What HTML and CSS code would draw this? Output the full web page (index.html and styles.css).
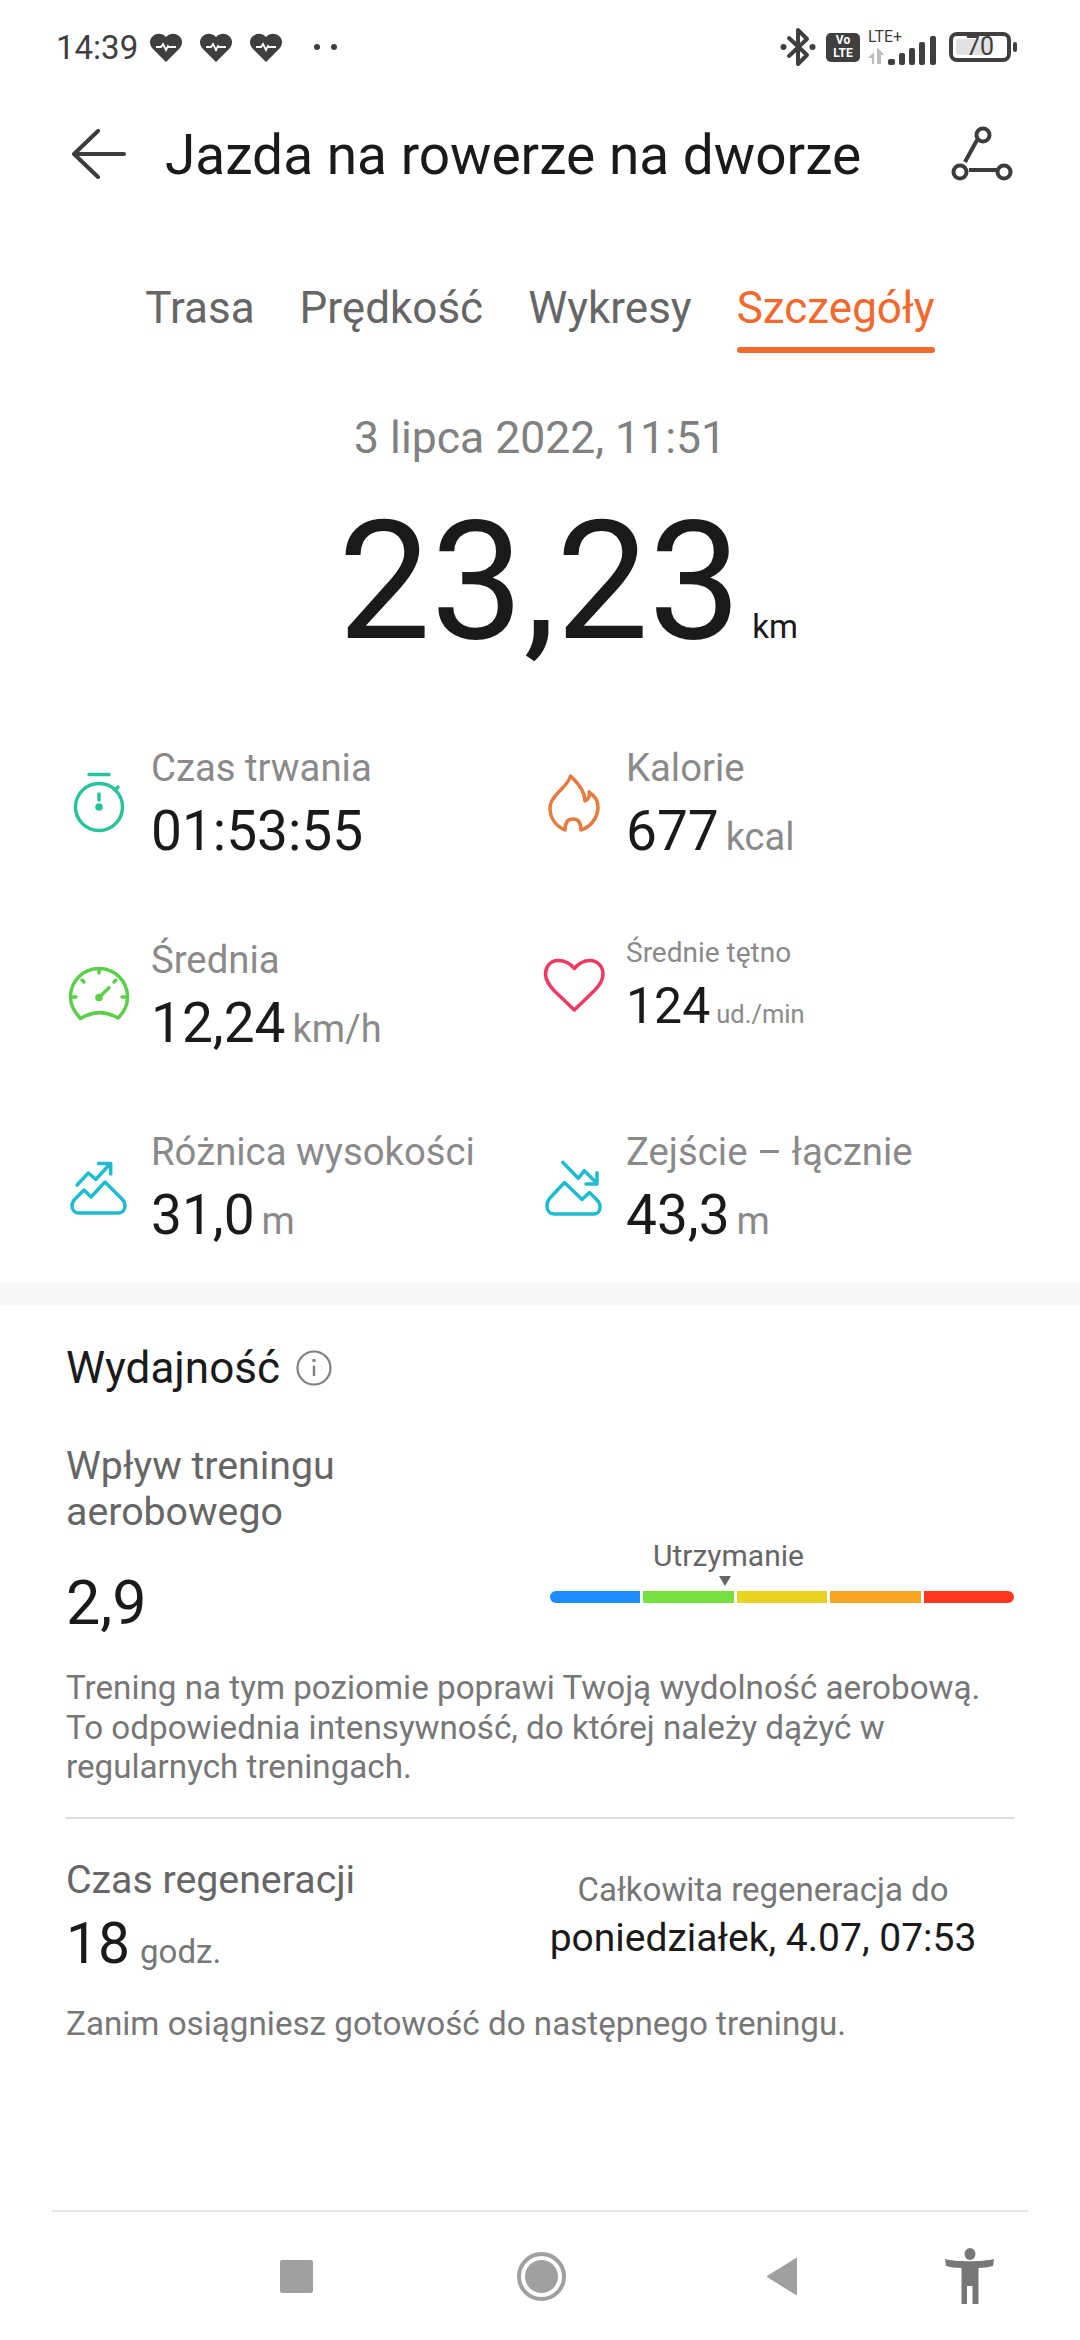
FILE: index.html
```html
<!DOCTYPE html>
<html lang="pl">
<head>
	<meta charset="utf-8">
	<title>Jazda na rowerze na dworze</title>
	<link rel="stylesheet" href="styles.css">
</head>
<body>
<div class="screen">

	<div class="statusbar">
		<span class="time">14:39</span>
		<svg class="heart-ic" viewBox="0 0 32 29"><path class="heart-fill" d="M16 29 3 16C-1 12-1 6 3 3c4-3 9-3 13 1 4-4 9-4 13-1 4 3 4 9 0 13Z"/><path class="heart-pulse" d="M6 14h5l2-3 3 6 2-4 1 1h7"/></svg>
		<svg class="heart-ic" viewBox="0 0 32 29"><path class="heart-fill" d="M16 29 3 16C-1 12-1 6 3 3c4-3 9-3 13 1 4-4 9-4 13-1 4 3 4 9 0 13Z"/><path class="heart-pulse" d="M6 14h5l2-3 3 6 2-4 1 1h7"/></svg>
		<svg class="heart-ic" viewBox="0 0 32 29"><path class="heart-fill" d="M16 29 3 16C-1 12-1 6 3 3c4-3 9-3 13 1 4-4 9-4 13-1 4 3 4 9 0 13Z"/><path class="heart-pulse" d="M6 14h5l2-3 3 6 2-4 1 1h7"/></svg>
		<span class="dots"><i></i><i></i></span>
		<div class="status-right">
			<svg class="bt-ic" viewBox="0 0 36 40"><path d="M9 11 27 28 18 37V3l9 9L9 29" fill="none" stroke="#3f3f3f" stroke-width="4" stroke-linejoin="round" stroke-linecap="round"/><circle cx="3.5" cy="20" r="3" fill="#3f3f3f"/><circle cx="32.5" cy="20" r="3" fill="#3f3f3f"/></svg>
			<div class="volte"><span>Vo</span><span>LTE</span></div>
			<div class="signal">
				<span class="lte">LTE+</span>
				<svg viewBox="0 0 68 20" class="signal-ic">
					<path d="M0 13 6 7V19H4V13Z M9 3h1l6 7h-3v9H9Z" fill="#bdbdbd"/>
					<rect x="20" y="14" width="7" height="6" rx="2" fill="#3f3f3f"/>
					<rect x="31" y="8" width="6" height="12" rx="2" fill="#3f3f3f"/>
					<rect x="41" y="3" width="6" height="17" rx="2" fill="#3f3f3f"/>
					<rect x="51" y="-3" width="6" height="23" rx="2" fill="#3f3f3f"/>
					<rect x="62" y="-9" width="6" height="29" rx="2" fill="#3f3f3f"/>
				</svg>
			</div>
			<div class="battery"><div class="battery-fill"></div><span class="battery-num">70</span></div>
			<div class="battery-nub"></div>
		</div>
	</div>

	<div class="titlebar">
		<svg class="back-ic" viewBox="0 0 56 50"><path d="M27 2 3 25 27 48M3 25H53" fill="none" stroke="#3c3c3c" stroke-width="4" stroke-linecap="round" stroke-linejoin="round"/></svg>
		<h1 class="title">Jazda na rowerze na dworze</h1>
		<svg class="route-ic" viewBox="0 0 64 56"><path d="M26 14 14 36M18 44H46" stroke="#3c3c3c" stroke-width="4" fill="none"/><circle cx="32" cy="9" r="6.5" fill="none" stroke="#3c3c3c" stroke-width="4"/><circle cx="9" cy="46" r="6.5" fill="none" stroke="#3c3c3c" stroke-width="4"/><circle cx="53" cy="46" r="6.5" fill="none" stroke="#3c3c3c" stroke-width="4"/></svg>
	</div>

	<div class="tabs">
		<span class="tab">Trasa</span>
		<span class="tab">Prędkość</span>
		<span class="tab">Wykresy</span>
		<span class="tab tab-active">Szczegóły</span>
	</div>

	<div class="date">3 lipca 2022, 11:51</div>
	<div class="distance"><span class="distance-num">23,23</span><span class="distance-unit">km</span></div>

	<div class="stats">
		<div class="stat">
			<svg class="stat-ic" viewBox="0 0 64 64"><g fill="none" stroke="#25c59c" stroke-width="3.5" stroke-linecap="round"><circle cx="32" cy="36" r="23.5"/><path d="M22 3.5H42M48 19l3-3M32 23v6"/></g><circle cx="32" cy="36" r="3.8" fill="#25c59c"/></svg>
			<div class="stat-text">
				<div class="stat-label">Czas trwania</div>
				<div class="stat-value">01:53:55</div>
			</div>
		</div>
		<div class="stat">
			<svg class="stat-ic" viewBox="0 0 64 64"><path d="M28.500 5C27 12 20 17 15 23 10 28 8 33 8 37c0 10 6 18 15 22 0-6 2-11 8-11s8 5 8 11c10-3 17-13 17-23 0-6-3-11-9-15 1 4 0 7-4 9C43 20 36 12 28.500 5Z" fill="none" stroke="#e77a3f" stroke-width="3.5" stroke-linejoin="round"/></svg>
			<div class="stat-text">
				<div class="stat-label">Kalorie</div>
				<div class="stat-value">677<span class="stat-unit">kcal</span></div>
			</div>
		</div>
		<div class="stat">
			<svg class="stat-ic" viewBox="0 0 64 64"><g fill="none" stroke="#5ccf4a" stroke-width="3.5" stroke-linecap="round"><path d="M13.7 55.5C7 49 3.5 42 3.5 34a28.500 28.500 0 0 1 57 0c0 8-3 15-9.500 21M13.700 55.500Q32 44 51 55"/><path d="M32 7v3M15 17l2 2M49 17l-2 2M6 34h3M58 34h-3M32 34.500 42 24.700"/></g><circle cx="32" cy="34.500" r="3.800" fill="#5ccf4a"/></svg>
			<div class="stat-text">
				<div class="stat-label">Średnia</div>
				<div class="stat-value">12,24<span class="stat-unit">km/h</span></div>
			</div>
		</div>
		<div class="stat">
			<svg class="stat-ic" viewBox="0 0 64 64"><path d="M32.300 5.500C28 0 22-2.500 16-2.500 8-2.500 3.500 4 3.500 11c0 7 4.500 12 8.500 16.500L32.300 47l20.200-19.500C57 23 61 18 61 11c0-7-5-13.500-13-13.500-6 0-11 2.500-15.700 8Z" fill="none" stroke="#ee3a62" stroke-width="3.500" stroke-linejoin="round"/></svg>
			<div class="stat-text">
				<div class="stat-label stat-label-small">Średnie tętno</div>
				<div class="stat-value stat-value-small">124<span class="stat-unit stat-unit-small">ud./min</span></div>
			</div>
		</div>
		<div class="stat">
			<svg class="stat-ic" viewBox="0 0 64 64"><g fill="none" stroke="#1fbcd0" stroke-width="3.500" stroke-linecap="round" stroke-linejoin="round"><path d="M10 30 21.300 18 29 24.300 43 9M31.500 8.500H43.700V19"/><path d="M12 58H51c5 0 7-4 7-7 0-3-1-5-3-7L38 27 24 42l-7-7-9 9c-2 2-3 4-3 7 0 4 3 7 7 7Z"/></g></svg>
			<div class="stat-text">
				<div class="stat-label">Różnica wysokości</div>
				<div class="stat-value">31,0<span class="stat-unit">m</span></div>
			</div>
		</div>
		<div class="stat">
			<svg class="stat-ic" viewBox="0 0 64 64"><g fill="none" stroke="#1fbcd0" stroke-width="3.500" stroke-linecap="round" stroke-linejoin="round"><path d="M20.700 7.300 36.300 23.300 42.300 15.700 55 28.300M55 17.700V29H44"/><path d="M12 59H52c4 0 6-3 6-7 0-3-1-5-3-7l-7.500-7.500L40 44.500 22.500 27.500 8 43c-2 2-3 5-3 8 0 5 3 8 7 8Z"/></g></svg>
			<div class="stat-text">
				<div class="stat-label">Zejście – łącznie</div>
				<div class="stat-value">43,3<span class="stat-unit">m</span></div>
			</div>
		</div>
	</div>

	<div class="band"></div>

	<div class="perf">
		<div class="perf-head">
			<span class="perf-title">Wydajność</span>
			<svg class="info-ic" viewBox="0 0 36 36"><circle cx="18" cy="18" r="16.500" fill="none" stroke="#808080" stroke-width="2.200"/><circle cx="18" cy="10.500" r="1.800" fill="#808080"/><path d="M18 15.500V26" stroke="#808080" stroke-width="2.400"/></svg>
		</div>

		<div class="effect">
			<div class="effect-left">
				<div class="effect-label">Wpływ treningu<br>aerobowego</div>
				<div class="effect-num">2,9</div>
			</div>
			<div class="gauge">
				<div class="gauge-label">Utrzymanie</div>
				<div class="gauge-arrow"></div>
				<div class="gauge-bar">
					<div class="seg seg-blue"></div>
					<div class="seg seg-green"></div>
					<div class="seg seg-yellow"></div>
					<div class="seg seg-orange"></div>
					<div class="seg seg-red"></div>
				</div>
			</div>
		</div>

		<p class="note">Trening na tym poziomie poprawi Twoją wydolność aerobową. To odpowiednia intensywność, do której należy dążyć w regularnych treningach.</p>

		<div class="regen">
			<div class="regen-left">
				<div class="effect-label">Czas regeneracji</div>
				<div class="regen-num">18<span class="regen-unit">godz.</span></div>
			</div>
			<div class="regen-right">
				<div class="regen-until">Całkowita regeneracja do</div>
				<div class="regen-date">poniedziałek, 4.07, 07:53</div>
			</div>
		</div>

		<p class="note note-last">Zanim osiągniesz gotowość do następnego treningu.</p>
	</div>

	<div class="navbar">
		<div class="nav-square"></div>
		<div class="nav-home"><div class="nav-home-dot"></div></div>
		<svg class="nav-back" viewBox="0 0 32 37"><path d="M30 1 2 18.500 30 36Z" fill="#a0a0a0" stroke="#a0a0a0" stroke-width="2" stroke-linejoin="round"/></svg>
		<svg class="nav-person" viewBox="0 0 49 56"><ellipse cx="25" cy="6" rx="5.500" ry="6" fill="#777"/><path d="M0 11C10 14 39 14 49 11L48 18C44 19 38 20 33.500 20V56H27.500V38H22V56H16.500V20C11 20 5 19 1 18Z" fill="#777"/></svg>
	</div>
</div>
</body>
</html>
```

FILE: styles.css
```css
* {
	box-sizing: border-box;
}
body {
	margin: 0;
	background: #fff;
	font-family: Roboto, "Noto Sans", sans-serif;
	color: #1a1a1a;
}
.screen {
	width: 1080px;
	height: 2340px;
	display: flex;
	flex-direction: column;
	overflow: hidden;
}

/* status bar */
.statusbar {
	height: 94px;
	display: flex;
	align-items: center;
	padding-left: 56px;
	color: #3f3f3f;
}
.time {
	font-size: 33px;
	width: 94px;
}
.heart-ic {
	width: 32px;
	height: 29px;
	margin-right: 18px;
}
.heart-fill {
	fill: #3f3f3f;
}
.heart-pulse {
	fill: none;
	stroke: #fff;
	stroke-width: 1.800;
}
.dots {
	display: flex;
	gap: 11px;
	margin-left: 14px;
}
.dots i {
	width: 6px;
	height: 6px;
	border-radius: 50%;
	background: #3f3f3f;
}
.status-right {
	margin-left: auto;
	display: flex;
	align-items: center;
	padding-right: 63px;
}
.bt-ic {
	width: 36px;
	height: 40px;
}
.volte {
	width: 34px;
	height: 29px;
	margin-left: 10px;
	background: #3f3f3f;
	border-radius: 5px;
	color: #fff;
	font-size: 12px;
	font-weight: 700;
	line-height: 13px;
	display: flex;
	flex-direction: column;
	align-items: center;
	justify-content: center;
}
.signal {
	width: 68px;
	height: 36px;
	margin-left: 8px;
	position: relative;
}
.lte {
	font-size: 16px;
	line-height: 16px;
	display: block;
}
.signal-ic {
	position: absolute;
	left: 0;
	bottom: 0;
	width: 68px;
	height: 20px;
	overflow: visible;
}
.battery {
	width: 62px;
	height: 30px;
	margin-left: 13px;
	border: 4px solid #3f3f3f;
	border-radius: 8px;
	position: relative;
	display: flex;
	align-items: center;
	justify-content: center;
}
.battery-fill {
	position: absolute;
	left: 3px;
	top: 3px;
	bottom: 3px;
	width: 36px;
	background: #e2e2e2;
	border-radius: 2px;
}
.battery-num {
	position: relative;
	font-size: 25px;
	line-height: 22px;
}
.battery-nub {
	width: 4px;
	height: 10px;
	margin-left: 2px;
	background: #3f3f3f;
	border-radius: 2px;
}

/* title */
.titlebar {
	height: 120px;
	display: flex;
	align-items: center;
	padding-left: 71px;
}
.back-ic {
	width: 56px;
	height: 50px;
}
.title {
	margin: 2px 0 0 38px;
	font-size: 55px;
	font-weight: 400;
}
.route-ic {
	width: 64px;
	height: 56px;
	margin-left: 90px;
}

.tabs {
	display: flex;
	justify-content: center;
	gap: 45px;
	margin-top: 40px;
	color: #666;
	font-size: 44px;
}
.tab {
	height: 99px;
	line-height: 108px;
}
.tab-active {
	color: #f4682c;
	position: relative;
}
.tab-active::after {
	content: "";
	position: absolute;
	left: 0;
	right: 0;
	bottom: 0;
	height: 6px;
	border-radius: 3px;
	background: #f4682c;
}

.date {
	margin-top: 60px;
	text-align: center;
	font-size: 44.5px;
	line-height: 50px;
	color: #808080;
}
.distance {
	display: flex;
	justify-content: center;
	align-items: baseline;
	height: 170px;
	margin-top: 34px;
	padding-left: 56px;
	line-height: 170px;
}
.distance-num {
	font-size: 165px;
}
.distance-unit {
	font-size: 33px;
	margin-left: 11px;
}

/* stats */
.stats {
	display: grid;
	grid-template-columns: 475px 1fr;
	grid-template-rows: 192px 192px 155px;
	margin-top: 77px;
	padding-left: 67px;
}
.stat {
	display: flex;
	gap: 20px;
}
.stat-ic {
	width: 64px;
	height: 64px;
	margin-top: 27px;
	overflow: visible;
	flex: none;
}
.stat-label {
	font-size: 38.3px;
	line-height: 48px;
	color: #8a8a8a;
}
.stat-label-small {
	font-size: 28px;
	line-height: 38px;
	margin-top: -2px;
}
.stat-value {
	font-size: 55px;
	line-height: 66px;
	margin-top: 6px;
}
.stat-value-small {
	font-size: 50px;
	line-height: 54px;
	margin-top: 7px;
}
.stat-unit {
	font-size: 38px;
	color: #8a8a8a;
	margin-left: 7px;
}
.stat-unit-small {
	font-size: 25.5px;
	margin-left: 6px;
}

.band {
	height: 22px;
	background: #f7f7f7;
}

/* performance */
.perf {
	padding: 0 66px;
}
.perf-head {
	display: flex;
	align-items: center;
	gap: 16px;
	margin-top: 38px;
}
.perf-title {
	font-size: 44px;
	line-height: 50px;
}
.info-ic {
	width: 36px;
	height: 36px;
}
.effect {
	display: flex;
	margin-top: 50px;
}
.effect-left {
	flex: 1;
}
.effect-label {
	font-size: 39.3px;
	line-height: 46px;
	color: #666;
}
.effect-num {
	font-size: 61px;
	line-height: 70px;
	margin-top: 33px;
}
.gauge {
	width: 464px;
	display: flex;
	flex-direction: column;
	padding-top: 95px;
}
.gauge-label {
	margin-left: 103px;
	font-size: 30px;
	line-height: 36px;
	color: #666;
}
.gauge-arrow {
	width: 0;
	height: 0;
	margin-top: 2px;
	margin-left: 169px;
	border-left: 6px solid transparent;
	border-right: 6px solid transparent;
	border-top: 10px solid #666;
}
.gauge-bar {
	width: 464px;
	height: 12px;
	margin-top: 5px;
	display: flex;
	gap: 3px;
	border-radius: 6px;
	overflow: hidden;
}
.seg {
	flex: 1;
}
.seg-blue { background: #1e8cff; }
.seg-green { background: #76e040; }
.seg-yellow { background: #e8d420; }
.seg-orange { background: #f6a623; }
.seg-red { background: #fe3720; }
.note {
	margin: 30px 0 0;
	font-size: 33.2px;
	line-height: 39.5px;
	color: #777;
}
.regen {
	display: flex;
	margin-top: 30px;
	padding-top: 38px;
	border-top: 2px solid #ddd;
}
.regen-left {
	flex: 1;
}
.regen-num {
	font-size: 57px;
	line-height: 66px;
	margin-top: 8px;
}
.regen-unit {
	font-size: 33px;
	color: #777;
	margin-left: 10px;
}
.regen-right {
	width: 450px;
	margin-right: 26px;
	text-align: center;
	padding-top: 13px;
}
.regen-until {
	font-size: 33px;
	line-height: 40px;
	color: #777;
}
.regen-date {
	font-size: 39px;
	line-height: 48px;
	margin-top: 4px;
}
.note-last {
	margin-top: 19px;
}

/* nav */
.navbar {
	margin: auto 52px 0;
	height: 130px;
	border-top: 2px solid #e6e6e6;
	display: flex;
	align-items: center;
	padding-left: 228px;
}
.nav-square {
	width: 33px;
	height: 33px;
	border-radius: 2px;
	background: #a0a0a0;
}
.nav-home {
	width: 49px;
	height: 49px;
	margin-left: 204px;
	border: 4px solid #a0a0a0;
	border-radius: 50%;
	padding: 4px;
}
.nav-home-dot {
	width: 33px;
	height: 33px;
	border-radius: 50%;
	background: #a0a0a0;
}
.nav-back {
	width: 32px;
	height: 37px;
	margin-left: 200px;
}
.nav-person {
	width: 49px;
	height: 56px;
	margin-left: 147px;
}
```
